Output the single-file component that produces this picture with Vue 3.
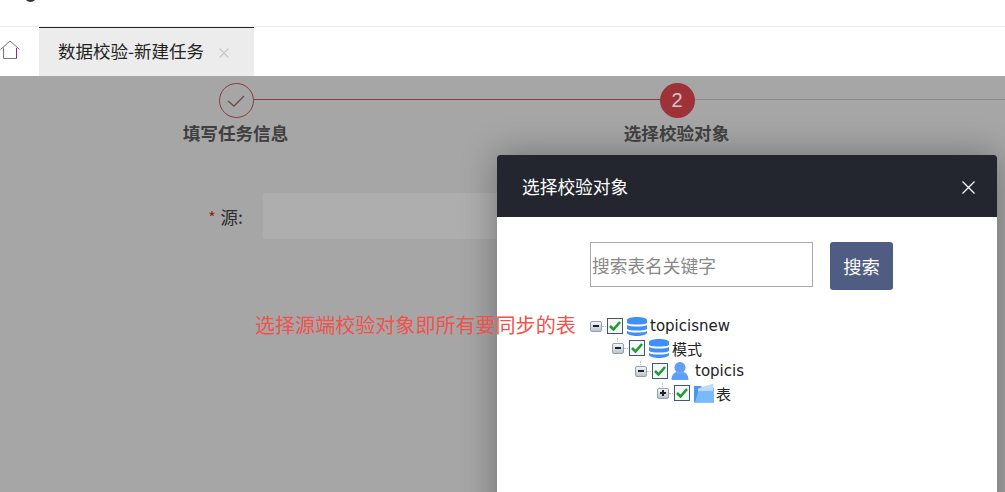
<script setup>
const steps = [
  { label: '填写任务信息' },
  { label: '选择校验对象' },
]
const tree = [
  { label: 'topicisnew', icon: 'db', toggle: 'minus', depth: 0 },
  { label: '模式', icon: 'db', toggle: 'minus', depth: 1 },
  { label: 'topicis', icon: 'user', toggle: 'minus', depth: 2 },
  { label: '表', icon: 'folder', toggle: 'plus', depth: 3 },
]
</script>

<template>
  <div class="page">
    <header class="topbar"><span class="logo"></span></header>
    <nav class="tabs">
      <svg class="home" width="20" height="20" viewBox="0 0 20 20" fill="none">
        <path d="M0.500 9.500 L10 1 L19.500 9.500" stroke="#777" stroke-width="1" />
        <path d="M3.500 7.500 V18.500 H16.500" stroke="#777" stroke-width="1" />
        <path d="M16.500 8 V18.500" stroke="#a0159a" stroke-width="1" />
      </svg>
      <div class="tab">
        <span>数据校验-新建任务</span>
        <svg class="tab-x" width="10" height="10" viewBox="0 0 10 10"><path d="M0.500 0.500 L9.500 9.500 M9.500 0.500 L0.500 9.500" stroke="#c8c8c8" stroke-width="1.200" /></svg>
      </div>
    </nav>
    <main class="content">
      <div class="steps">
        <div class="step step-one">
          <div class="circle circle-done">
            <svg width="18" height="12" viewBox="0 0 18 12" fill="none"><path d="M1 6 L7 11 L17 1" stroke="#6f4a4c" stroke-width="1.300" /></svg>
          </div>
          <div class="step-label">{{ steps[0].label }}</div>
        </div>
        <div class="step step-two">
          <div class="circle circle-now">2</div>
          <div class="step-label">{{ steps[1].label }}</div>
        </div>
        <div class="line line-red"></div>
        <div class="line line-gray"></div>
      </div>
      <div class="form-row">
        <label class="form-label"><i>*</i> 源:</label>
        <div class="form-input"></div>
      </div>
      <p class="note">选择源端校验对象即所有要同步的表</p>

      <section class="modal">
        <div class="modal-head">
          <span>选择校验对象</span>
          <svg width="13" height="13" viewBox="0 0 13 13"><path d="M0.500 0.500 L12.500 12.500 M12.500 0.500 L0.500 12.500" stroke="#fff" stroke-width="1.300" /></svg>
        </div>
        <div class="modal-body">
          <div class="search">
            <input class="search-input" placeholder="搜索表名关键字" />
            <button class="search-btn">搜索</button>
          </div>
          <ul class="tree">
            <li v-for="n in tree" :key="n.label" class="node" :class="'d' + n.depth">
              <span class="toggle"><b></b><b v-if="n.toggle === 'plus'" class="vert"></b></span>
              <span class="check">
                <svg width="12" height="10" viewBox="0 0 12 10" fill="none"><path d="M1 5 L4.500 8.500 L11 1" stroke="#1f9e2e" stroke-width="2.600" /></svg>
              </span>
              <svg v-if="n.icon === 'db'" class="ico ico-db" width="20" height="19" viewBox="0 0 20 19">
                <path d="M0 3 C0 -1 20 -1 20 3 V6 C18 8 2 8 0 6Z" fill="#3f8ff5" />
                <path d="M0 8 C3 10 17 10 20 8 V12 C17 14 3 14 0 12Z" fill="#3f8ff5" />
                <path d="M0 14 C3 16 17 16 20 14 V16 C18 20 2 20 0 16Z" fill="#3f8ff5" />
              </svg>
              <svg v-else-if="n.icon === 'user'" class="ico ico-user" width="18" height="18" viewBox="0 0 18 18">
                <circle cx="9" cy="5.500" r="5.500" fill="#5f9ff5" />
                <path d="M0.500 18 C0.500 13 3 10.500 6 10 C8 11.500 10 11.500 12 10 C15 10.500 17.500 13 17.500 18Z" fill="#5f9ff5" />
              </svg>
              <svg v-else class="ico ico-folder" width="20" height="20" viewBox="0 0 20 20">
                <path d="M0 3 H7 L9 5 H20 V19.500 H0Z" fill="#4a97f0" />
                <path d="M4 5.500 L19.500 0.500 V9 H4Z" fill="#bcdafb" />
                <path d="M1 19.500 L4.500 8 H20 V19.500Z" fill="#7ab9fa" />
              </svg>
              <span class="node-label" :class="'l-' + n.icon">{{ n.label }}</span>
            </li>
          </ul>
        </div>
      </section>
    </main>
  </div>
</template>

<style>
html, body { margin: 0; overflow: hidden; }
</style>

<style scoped>
.page {
  width: 1005px;
  height: 492px;
  display: flex;
  flex-direction: column;
  overflow: hidden;
  font-family: "Noto Sans CJK SC", "Liberation Sans", sans-serif;
  background: #fff;
}
.topbar {
  height: 26px;
  flex: none;
  border-bottom: 1px solid #eeeeee;
  position: relative;
  overflow: hidden;
}
.logo {
  position: absolute;
  left: 24px;
  top: -12px;
  width: 13px;
  height: 14px;
  border-radius: 50%;
  border: 3px solid #333;
  box-sizing: border-box;
}
.tabs {
  height: 49px;
  flex: none;
  display: flex;
  align-items: stretch;
  background: #fff;
}
.home { margin: 13px 0 0 0; flex: none; }
.tab {
  margin-left: 19px;
  margin-top: -1px;
  width: 215px;
  box-sizing: border-box;
  border-top: 2px solid #24262f;
  background: #ececec;
  display: flex;
  align-items: center;
  padding: 0 0 3px 19px;
  gap: 15px;
  font-size: 17.500px;
  color: #222;
}
.tab-x { margin-top: 4px; }
.content {
  flex: 1;
  position: relative;
  background: #a6a6a6;
}
.steps {
  height: 104px;
  position: relative;
}
.step {
  position: absolute;
  top: 7px;
  display: flex;
  flex-direction: column;
  align-items: center;
  width: 140px;
  z-index: 1;
}
.step-one { left: 165.500px; }
.step-two { left: 606.500px; }
.circle {
  width: 35px;
  height: 35px;
  box-sizing: border-box;
  border-radius: 50%;
  display: flex;
  align-items: center;
  justify-content: center;
}
.step-one .circle, .step-two .circle { margin-left: 1px; }
.circle-done { border: 1px solid #8b3b40; background: #a6a6a6; }
.circle-now {
  background: #9e3238;
  color: #d8c4c5;
  font-size: 20px;
  font-family: "Liberation Sans", sans-serif;
}
.step-label {
  margin-top: 3px;
  font-size: 17.600px;
  font-weight: 700;
  line-height: 24px;
  color: #3f3f3f;
}
.line { position: absolute; top: 23px; height: 1px; }
.line-red { left: 254px; width: 406px; background: #8b3b40; }
.line-gray { left: 695px; right: 0; background: #8a8a8a; }
.form-row {
  margin-top: 13px;
  display: flex;
  align-items: center;
  height: 46px;
}
.form-label {
  width: 243px;
  text-align: right;
  font-size: 17.500px;
  color: #2c2c2c;
  margin-right: 20px;
  flex: none;
}
.form-label i { color: #a01818; font-style: normal; font-size: 16px; margin-right: 1px; }
.form-input {
  width: 260px;
  height: 46px;
  background: #aeaeae;
  border-radius: 2px;
}
.note {
  position: absolute;
  left: 255px;
  top: 236px;
  margin: 0;
  font-size: 20.060px;
  line-height: 26px;
  color: #f0524c;
  z-index: 2;
}
.modal {
  position: absolute;
  left: 497px;
  top: 79px;
  width: 500px;
  height: 420px;
  border-radius: 3px 3px 0 0;
  background: #fff;
  box-shadow: 0 0 36px rgba(0, 0, 0, .33);
}
.modal-head {
  height: 62px;
  box-sizing: border-box;
  background: #24262f;
  border-radius: 3px 3px 0 0;
  color: #fff;
  font-size: 17.700px;
  display: flex;
  align-items: center;
  justify-content: space-between;
  padding: 0 22px 1px 25px;
}
.modal-head svg { margin-top: 3px; }
.modal-body { padding: 25px 0 0 93px; }
.search { display: flex; gap: 17px; align-items: flex-start; }
.search-input {
  width: 223px;
  height: 45px;
  box-sizing: border-box;
  border: 1px solid #aaa;
  padding: 0 1px;
  font-size: 17.700px;
  font-family: inherit;
  outline: none;
}
.search-input::placeholder { color: #888; }
.search-btn {
  width: 63px;
  height: 48px;
  border: 0;
  border-radius: 3px;
  background: #505d82;
  color: #fff;
  font-size: 18.300px;
  font-family: inherit;
  padding: 0;
}
.tree {
  list-style: none;
  margin: 25px 0 0;
  padding: 0;
}
.node {
  height: 22px;
  display: flex;
  align-items: center;
  font-size: 15px;
  color: #222;
}
.d1 { margin-left: 22px; margin-bottom: 1px; }
.d2 { margin-left: 45px; }
.d3 { margin-left: 67px; }
.toggle {
  width: 12px;
  height: 11px;
  box-sizing: border-box;
  border: 1px solid #8fa0b4;
  border-radius: 2px;
  background: linear-gradient(#f4f6f8, #bcc4cc);
  position: relative;
  flex: none;
  margin-right: 5px;
}
.toggle::after {
  content: "";
  position: absolute;
  left: 100%;
  top: 4px;
  width: 4px;
  margin-left: 1px;
  border-top: 1px dotted #c4c4c4;
}
.d1 .toggle::before, .d2 .toggle::before, .d3 .toggle::before {
  content: "";
  position: absolute;
  left: 4px;
  bottom: 100%;
  height: 4px;
  margin-bottom: 2px;
  border-left: 1px dotted #c4c4c4;
}
.toggle b {
  position: absolute;
  left: 2px;
  top: 3.500px;
  width: 6px;
  height: 2px;
  background: #222;
}
.toggle .vert { left: 4px; top: 1.500px; width: 2px; height: 6px; }
.check {
  width: 16px;
  height: 16px;
  box-sizing: border-box;
  border: 1px solid #3f5878;
  background: #f4f6f8;
  display: flex;
  align-items: center;
  justify-content: center;
  flex: none;
  margin-right: 4px;
}
.ico { flex: none; }
.ico-user { margin-left: -1px; }
.node-label {
  margin-left: 3px;
  font-family: "DejaVu Sans", "Noto Sans CJK SC", sans-serif;
}
.l-user { margin-left: 6px; }
.l-folder { margin-left: 2px; }
.l-db { margin-left: 3px; }
</style>
